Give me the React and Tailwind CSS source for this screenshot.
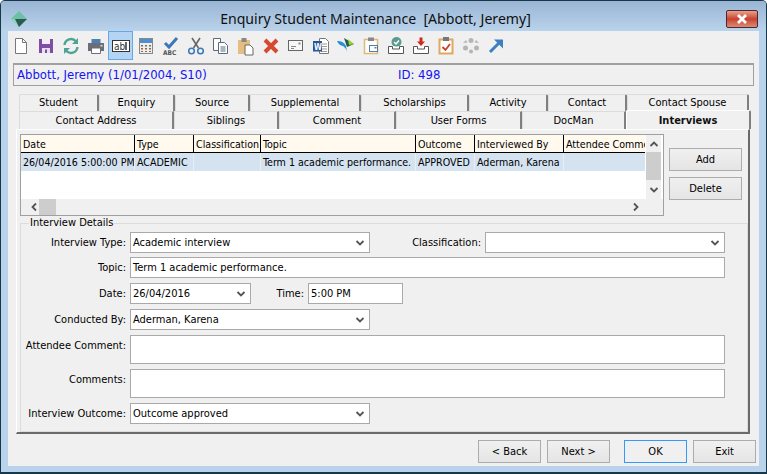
const FONT = "font-['DejaVu_Sans_Condensed',sans-serif]";

const TABS_TOP = [
  { label: "Student", w: 80 },
  { label: "Enquiry", w: 76 },
  { label: "Source", w: 75 },
  { label: "Supplemental", w: 111 },
  { label: "Scholarships", w: 108 },
  { label: "Activity", w: 79 },
  { label: "Contact", w: 79 },
  { label: "Contact Spouse", w: 122 },
];

const TABS_BOTTOM = [
  { label: "Contact Address", w: 155 },
  { label: "Siblings", w: 105 },
  { label: "Comment", w: 117 },
  { label: "User Forms", w: 126 },
  { label: "DocMan", w: 104 },
];

const COLUMNS = [
  { head: "Date", cell: "26/04/2016 5:00:00 PM", w: "w-[114px]" },
  { head: "Type", cell: "ACADEMIC", w: "w-[59px]" },
  { head: "Classification", cell: "", w: "w-[67px]" },
  { head: "Topic", cell: "Term 1 academic performance.", w: "w-[155px]" },
  { head: "Outcome", cell: "APPROVED", w: "w-[59px]" },
  { head: "Interviewed By", cell: "Aderman, Karena", w: "w-[89px]" },
  { head: "Attendee Comment", cell: "", w: "w-[81px]" },
];

function Chevron({ dir = "down", className = "" }) {
  const paths = {
    down: "M1.5 3 L5 6.5 L8.5 3",
    up: "M1.5 7 L5 3.5 L8.5 7",
    left: "M7 1.5 L3.5 5 L7 8.5",
    right: "M3 1.5 L6.5 5 L3 8.5",
  };
  return (
    <svg viewBox="0 0 10 10" className={`w-[10px] h-[10px] shrink-0 ${className}`}>
      <path d={paths[dir]} fill="none" stroke="#555" strokeWidth="1.8" />
    </svg>
  );
}

function ToolIcon({ children, active }) {
  return (
    <div
      className={`w-[25px] h-[29px] flex items-center justify-center shrink-0 ${
        active ? "bg-[#b3d4f3] border border-[#66a7e8]" : ""
      }`}
    >
      <svg viewBox="0 0 20 20" className="w-[20px] h-[20px]">
        {children}
      </svg>
    </div>
  );
}

function Toolbar() {
  return (
    <div className="h-[32px] flex items-start">
      <ToolIcon>
        <path d="M4.500 2.500h7l4 4v11h-11z" fill="#fff" stroke="#777" />
        <path d="M11.500 2.500v4h4" fill="none" stroke="#777" />
      </ToolIcon>
      <ToolIcon>
        <path d="M3 3h14v14H3z" fill="#7d4ea3" />
        <path d="M6 3h8v5H6z" fill="#f3eef7" />
        <path d="M6 12h8v5H6z" fill="#e9dff0" />
        <path d="M9 13.500h2v3.500H9z" fill="#7d4ea3" />
      </ToolIcon>
      <ToolIcon>
        <path d="M3.500 9a6.500 6.500 0 0 1 11.500-3.500" fill="none" stroke="#4fa394" strokeWidth="2.400" />
        <path d="M17 2v6h-6z" fill="#4fa394" />
        <path d="M16.500 11a6.500 6.500 0 0 1-11.500 3.500" fill="none" stroke="#4fa394" strokeWidth="2.400" />
        <path d="M3 18v-6h6z" fill="#4fa394" />
      </ToolIcon>
      <ToolIcon>
        <path d="M5.500 3h9v4h-9z" fill="#4f7fb3" />
        <path d="M2 7h16v8H2z" fill="#6b6f75" />
        <path d="M5.500 12h9v5.500h-9z" fill="#fff" stroke="#6b6f75" />
        <path d="M14.500 9h2v1.500h-2z" fill="#ddd" />
      </ToolIcon>
      <ToolIcon active>
        <rect x="1.500" y="4.500" width="17" height="11" fill="#fff" stroke="#333" />
        <text x="3" y="13.500" fontSize="10" fill="#333" fontFamily="DejaVu Sans Condensed">ab</text>
        <path d="M15 6v8" stroke="#000" strokeWidth="1.200" />
      </ToolIcon>
      <ToolIcon>
        <rect x="3.500" y="2.500" width="13" height="15" fill="#eee" stroke="#888" />
        <path d="M4 3h12v4H4z" fill="#4f8fd0" />
        <path
          d="M5 9h2v1.500H5zM9 9h2v1.500H9zM13 9h2v1.500h-2zM5 12h2v1.500H5zM9 12h2v1.500H9zM13 12h2v1.500h-2zM5 15h2v1H5zM9 15h2v1H9zM13 15h2v1h-2z"
          fill="#8a6a4a"
        />
      </ToolIcon>
      <ToolIcon>
        <path d="M4 7l4 4 8-9" fill="none" stroke="#3d78b8" strokeWidth="3" />
        <text x="2" y="19" fontSize="6.500" fontWeight="700" fill="#555" fontFamily="DejaVu Sans Condensed">ABC</text>
      </ToolIcon>
      <ToolIcon>
        <path d="M6 2l6.500 10M14 2L7.500 12" stroke="#666" strokeWidth="1.600" />
        <circle cx="5.500" cy="15" r="2.800" fill="none" stroke="#3d78b8" strokeWidth="1.500" />
        <circle cx="14.500" cy="15" r="2.800" fill="none" stroke="#3d78b8" strokeWidth="1.500" />
      </ToolIcon>
      <ToolIcon>
        <path d="M2.500 2.500h7v12h-7z" fill="#fff" stroke="#5b6b7b" />
        <path d="M7.500 6.500h6l3 3v8h-9z" fill="#fff" stroke="#5b6b7b" />
        <path d="M9.500 11h5M9.500 13h5M9.500 15h5" stroke="#5b6b7b" />
      </ToolIcon>
      <ToolIcon>
        <path d="M2 4h12v14H2z" fill="#e5bd80" />
        <path d="M5.500 2h5v4h-5z" fill="#888" />
        <path d="M9 9h5l3 3v7H9z" fill="#fff" stroke="#666" />
      </ToolIcon>
      <ToolIcon>
        <path d="M4 4l12 12M16 4L4 16" stroke="#d4492f" strokeWidth="4" />
      </ToolIcon>
      <ToolIcon>
        <rect x="2.500" y="4.500" width="14" height="10" fill="#f7f7f7" stroke="#666" />
        <path d="M12.500 6.500h2v2h-2z" fill="#888" />
        <path d="M5 10.500h5M5 12.500h3" stroke="#888" />
      </ToolIcon>
      <ToolIcon>
        <path d="M8.500 2.500h6l3 3v12h-9z" fill="#fff" stroke="#777" />
        <path d="M10 8h6M10 10.500h6M10 13h6M10 15.500h6" stroke="#999" />
        <path d="M2 5h9v10.500H2z" fill="#2a5699" />
        <text x="3" y="13.500" fontSize="8" fontWeight="700" fill="#fff" fontFamily="DejaVu Sans Condensed">W</text>
      </ToolIcon>
      <ToolIcon>
        <path d="M1 5c4 0 7 1 9 5l1 6c-1-4-3-6-7-7C3 8 2 7 1 5z" fill="#2b8fd8" />
        <path d="M8 2l10 6-7 3c-1-3-2-6-3-9z" fill="#1f5e48" />
        <path d="M12 3l6 5-5 1z" fill="#9bd13c" />
      </ToolIcon>
      <ToolIcon>
        <path d="M3.500 3.500h13v14h-13z" fill="#fff" stroke="#e0b878" strokeWidth="1.500" />
        <path d="M7 1.500h6v3.500H7z" fill="#888" />
        <rect x="8.500" y="9.500" width="8" height="6" fill="#fff" stroke="#4f7fa8" />
        <path d="M13.500 11h2v1.500h-2z" fill="#4f7fa8" />
      </ToolIcon>
      <ToolIcon>
        <circle cx="10.500" cy="6" r="5" fill="#5a9a8f" />
        <path d="M8 6l2 2 3-3.500" fill="none" stroke="#fff" strokeWidth="1.500" />
        <path d="M2.500 10.500v7h15v-7M2.500 10.500h4v2.500h7v-2.500h4" fill="#fff" stroke="#555" />
      </ToolIcon>
      <ToolIcon>
        <path d="M8.500 1.500h3v4h2.500L10 10 6 5.500h2.500z" fill="#cc2a1e" />
        <path d="M2.500 10.500v7h15v-7M2.500 10.500h4v2.500h7v-2.500h4" fill="#fff" stroke="#555" />
      </ToolIcon>
      <ToolIcon>
        <path d="M3.500 3.500h13v14h-13z" fill="#fff" stroke="#e0a860" strokeWidth="2" />
        <path d="M7 1h6v4H7z" fill="#777" />
        <path d="M6.500 11l3 3 4.500-6" fill="none" stroke="#c9402e" strokeWidth="1.800" />
      </ToolIcon>
      <ToolIcon>
        <g fill="#b5b5b5">
          <circle cx="10" cy="4.500" r="2.500" />
          <circle cx="4.500" cy="12" r="2.500" />
          <circle cx="15.500" cy="12" r="2.500" />
          <circle cx="10" cy="15.500" r="2" />
          <path d="M2 7l3-3 1.500 2.500zM18 7l-3-3-1.500 2.500z" />
        </g>
      </ToolIcon>
      <ToolIcon>
        <path d="M4 16L14 6" stroke="#3d7fc0" strokeWidth="3" />
        <path d="M8 3.500h9v9z" fill="#3d7fc0" />
      </ToolIcon>
    </div>
  );
}

function ListColumn({ col, last }) {
  return (
    <div className={`${col.w} shrink-0 flex flex-col text-[10.6px]`}>
      <div
        className={`h-[18px] bg-[#fff9ee] border-b border-black pl-[2px] leading-[18px] overflow-hidden whitespace-nowrap ${
          last ? "" : "border-r"
        }`}
      >
        {col.head}
      </div>
      <div
        className={`h-[18px] bg-[#d5e3f1] pl-[2px] leading-[19px] overflow-hidden whitespace-nowrap ${
          last ? "" : "border-r border-[#e6eef6]"
        }`}
      >
        {col.cell}
      </div>
    </div>
  );
}

function InterviewList() {
  return (
    <div className="w-[644px] h-[82px] border border-[#a0a0a0] flex flex-col bg-white">
      <div className="flex h-[64px]">
        <div className="flex w-[625px] shrink-0">
          {COLUMNS.map((col, i) => (
            <ListColumn key={col.head} col={col} last={i === COLUMNS.length - 1} />
          ))}
        </div>
        <div className="w-[15px] bg-[#f0f0f0] flex flex-col items-center">
          <div className="h-[17px] flex items-center">
            <Chevron dir="up" />
          </div>
          <div className="w-full h-[28px] bg-[#cdcdcd]" />
          <div className="h-[19px] flex items-center">
            <Chevron dir="down" />
          </div>
        </div>
      </div>
      <div className="flex-1 bg-[#f0f0f0] flex items-center">
        <div className="w-[18px] flex justify-center pl-[7px]">
          <Chevron dir="left" />
        </div>
        <div className="w-[17px] h-full bg-[#cdcdcd]" />
        <div className="flex-1" />
        <div className="w-[32px] flex justify-start">
          <Chevron dir="right" />
        </div>
      </div>
    </div>
  );
}

function Btn({ children, focused, className = "" }) {
  return (
    <div
      className={`h-[23px] pt-[2px] flex items-center justify-center border ${
        focused
          ? "border-[#3399ff] bg-[#f0f0f0]"
          : "border-[#acacac] bg-gradient-to-b from-[#f0f0f0] to-[#e5e5e5]"
      } ${className}`}
    >
      {children}
    </div>
  );
}

function Field({ children, className = "" }) {
  return (
    <div className={`h-[21px] border border-[#a9a9a9] bg-white flex items-center pl-[2px] pr-[4px] ${className}`}>
      <span className="flex-1 pt-[2px] whitespace-nowrap">{children}</span>
    </div>
  );
}

function Combo({ value, className = "" }) {
  return (
    <div className={`h-[21px] border border-[#a9a9a9] bg-white flex items-center justify-between pl-[2px] pr-[4px] ${className}`}>
      <span className="pt-[2px]">{value}</span>
      <Chevron />
    </div>
  );
}

function Label({ children, tall }) {
  return (
    <div className={`w-[104px] mr-[4px] text-right shrink-0 whitespace-nowrap ${tall ? "pt-[3px]" : "pt-[2px]"}`}>
      {children}
    </div>
  );
}

export default function App() {
  return (
    <div
      className={`w-[767px] h-[474px] overflow-hidden text-[11px] text-black bg-[#b9d3ec] border border-[#17384a] border-b-2 rounded-t-[5px] ${FONT}`}
    >
      {/* title bar */}
      <div className="h-[30px] bg-gradient-to-b from-[#9ab5d4] to-[#b9d3ec] flex items-center pl-[9px] pr-[8px] pt-[5px]">
        <svg viewBox="0 0 18 18" className="w-[18px] h-[18px] shrink-0">
          <path d="M9 1l8 8-8 8-8-8z" fill="#8fd0bc" />
          <path d="M9 1l8 8H1z" fill="#6cc0a6" />
          <path d="M9 17l8-8H5z" fill="#2c5a50" />
        </svg>
        <div className="flex-1 text-center text-[14.1px] text-[#101010] whitespace-pre pr-[3px] pt-[1px] font-['Noto_Sans',sans-serif]">
          Enquiry Student Maintenance  [Abbott, Jeremy]
        </div>
        <div className="w-[32px] h-[18px] rounded-[2px] border border-[#4a2a2a] bg-gradient-to-b from-[#e8a08c] via-[#c9402e] to-[#d98a78] flex items-center justify-center">
          <svg viewBox="0 0 12 10" className="w-[12px] h-[10px]">
            <path d="M2 1l8 8M10 1L2 9" stroke="#fff" strokeWidth="2.800" />
          </svg>
        </div>
      </div>

      {/* client area */}
      <div className="ml-[7px] w-[751px] h-[435px] bg-[#f0f0f0] flex flex-col">
        <Toolbar />

        <div className="mx-[5px] h-[23px] border border-[#a0a0a0] border-t-2 flex items-center pl-[3px] pt-[2px] text-[11.7px] text-[#1414f0] font-['DejaVu_Sans',sans-serif]">
          <span className="w-[381px] whitespace-nowrap">Abbott, Jeremy (1/01/2004, S10)</span>
          <span>ID: 498</span>
        </div>

        {/* tabs */}
        <div className="ml-[11px] mt-[8px] flex h-[17px]">
          {TABS_TOP.map((t) => (
            <div
              key={t.label}
              style={{ width: t.w }}
              className="h-[17px] shrink-0 bg-[#f0f0f0] border-t border-l border-[#dcdcdc] border-r-2 border-r-[#808080] rounded-t-[2px] text-center leading-[15px]"
            >
              {t.label}
            </div>
          ))}
        </div>
        <div className="ml-[11px] flex items-end h-[18px]">
          {TABS_BOTTOM.map((t) => (
            <div
              key={t.label}
              style={{ width: t.w }}
              className="h-[18px] shrink-0 bg-[#f0f0f0] border-t border-l border-[#dcdcdc] border-r-2 border-r-[#808080] text-center leading-[17px]"
            >
              {t.label}
            </div>
          ))}
          <div className="w-[125px] h-[19px] shrink-0 bg-[#f0f0f0] border-t border-l border-white border-r-2 border-r-[#808080] rounded-t-[2px] text-center font-bold text-[#111] leading-[20px]">
            Interviews
          </div>
        </div>

        {/* tab panel */}
        <div className="ml-[8px] w-[734px] h-[305px] border-t border-l border-white border-r-2 border-b-2 border-r-[#6a6a6a] border-b-[#6a6a6a] pl-[3px] pt-[4px] flex flex-col">
          <div className="flex">
            <InterviewList />
            <div className="ml-[5px] pt-[14px] flex flex-col gap-[6px]">
              <Btn className="w-[73px]">Add</Btn>
              <Btn className="w-[73px]">Delete</Btn>
            </div>
          </div>

          <fieldset className="-mt-[1px] w-[728px] h-[217px] border border-[#dcdcdc] pl-[1px]">
            <legend className="ml-[7px] px-[1px] leading-[16px]">Interview Details</legend>
            <div className="flex items-center mt-[1px]">
              <Label>Interview Type:</Label>
              <Combo value="Academic interview" className="w-[240px]" />
              <div className="w-[111px] text-right mr-[4px] pt-[2px]">Classification:</div>
              <Combo value="" className="w-[240px]" />
            </div>
            <div className="flex items-center mt-[4px]">
              <Label>Topic:</Label>
              <Field className="w-[595px]">Term 1 academic performance.</Field>
            </div>
            <div className="flex items-center mt-[5px]">
              <Label>Date:</Label>
              <Combo value="26/04/2016" className="w-[121px]" />
              <div className="w-[53px] text-right mr-[4px] pt-[2px]">Time:</div>
              <Field className="w-[95px]">5:00 PM</Field>
            </div>
            <div className="flex items-center mt-[5px]">
              <Label>Conducted By:</Label>
              <Combo value="Aderman, Karena" className="w-[240px]" />
            </div>
            <div className="flex items-start mt-[5px]">
              <Label tall>Attendee Comment:</Label>
              <div className="w-[595px] h-[29px] border border-[#a9a9a9] bg-white" />
            </div>
            <div className="flex items-start mt-[5px]">
              <Label tall>Comments:</Label>
              <div className="w-[595px] h-[29px] border border-[#a9a9a9] bg-white" />
            </div>
            <div className="flex items-center mt-[5px]">
              <Label>Interview Outcome:</Label>
              <Combo value="Outcome approved" className="w-[240px]" />
            </div>
          </fieldset>
        </div>

        {/* footer */}
        <div className="mt-[6px] flex pl-[470px]">
          <Btn className="w-[63px]">&lt; Back</Btn>
          <Btn className="w-[63px] ml-[6px]">Next &gt;</Btn>
          <Btn focused className="w-[63px] ml-[14px]">OK</Btn>
          <Btn className="w-[63px] ml-[6px]">Exit</Btn>
        </div>
      </div>
    </div>
  );
}
